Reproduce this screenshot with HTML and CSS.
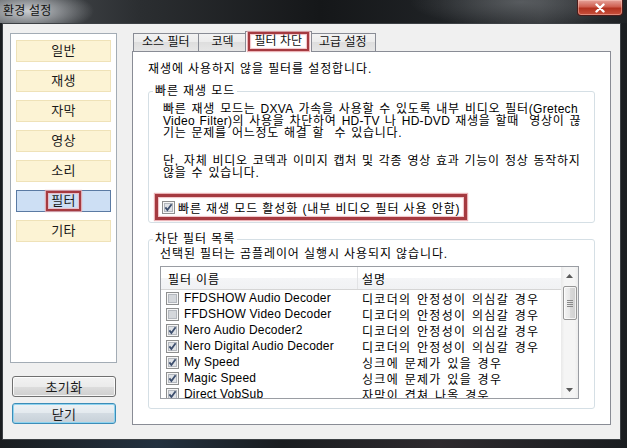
FILE: index.html
```html
<!DOCTYPE html>
<html lang="ko">
<head>
<meta charset="utf-8">
<title>환경 설정</title>
<link rel="stylesheet" href="styles.css">
</head>
<body>
<div class="window">
  <div class="titlebar">
    <div class="title">환경 설정</div>
    <div class="close">
      <svg width="14" height="10" viewBox="0 0 14 10"><path d="M3.5 1.5 L10.5 8.5 M10.5 1.5 L3.5 8.5" stroke="#ffffff" stroke-width="2.4" stroke-linecap="round"/></svg>
    </div>
  </div>
  <div class="client">
    <div class="sidebar">
      <div class="menu">
        <div class="menu-item">일반</div>
        <div class="menu-item">재생</div>
        <div class="menu-item">자막</div>
        <div class="menu-item">영상</div>
        <div class="menu-item">소리</div>
        <div class="menu-item selected"><span class="mark">필터</span></div>
        <div class="menu-item">기타</div>
      </div>
      <div class="btn reset">초기화</div>
      <div class="btn default">닫기</div>
    </div>
    <div class="tabs">
      <div class="tabstrip">
        <div class="tab">소스 필터</div>
        <div class="tab">코덱</div>
        <div class="tab active"><span class="mark">필터 차단</span></div>
        <div class="tab">고급 설정</div>
      </div>
      <div class="panel">
        <p class="intro">재생에 사용하지 않을 필터를 설정합니다.</p>
        <fieldset class="group g1">
          <legend>빠른 재생 모드</legend>
          <p class="para first">빠른 재생 모드는 <span class="lat">DXVA</span> 가속을 사용할 수 있도록 내부 비디오 필터<span class="lat">(Gretech</span><br><span class="lat">Video Filter)</span>의 사용을 차단하여 <span class="lat">HD-TV</span> 나 <span class="lat">HD-DVD</span> 재생을 할때&nbsp; 영상이 끊<br>기는 문제를 어느정도 해결 할&nbsp; 수 있습니다.</p>
          <p class="para second">단, 자체 비디오 코덱과 이미지 캡처 및 각종 영상 효과 기능이 정상 동작하지<br>않을 수 있습니다.</p>
          <div class="check-row">
            <svg class="cb" width="13" height="13" viewBox="0 0 13 13"><rect x="0.5" y="0.5" width="12" height="12" fill="#f6f6f6" stroke="#8e8f8f"/><rect x="2.5" y="2.5" width="8" height="8" fill="#dfe2e6" stroke="#b4b8be"/><path d="M3.4 6.4 L5.4 9 L9.6 3.3" fill="none" stroke="#3d4f6e" stroke-width="1.8"/></svg>
            <span>빠른 재생 모드 활성화 (내부 비디오 필터 사용 안함)</span>
          </div>
        </fieldset>
        <fieldset class="group g2">
          <legend>차단 필터 목록</legend>
          <p class="list-note">선택된 필터는 곰플레이어 실행시 사용되지 않습니다.</p>
          <div class="list">
            <div class="list-body">
              <div class="list-head">
                <div class="col1 head1">필터 이름</div>
                <div class="col2 head2">설명</div>
              </div>
              <div class="row">
                <div class="col1"><svg class="cb" width="13" height="13" viewBox="0 0 13 13"><rect x="0.5" y="0.5" width="12" height="12" fill="#f6f6f6" stroke="#8e8f8f"/><rect x="2.5" y="2.5" width="8" height="8" fill="#d4d7db" stroke="#b4b8be"/></svg>FFDSHOW Audio Decoder</div>
                <div class="col2">디코더의 안정성이 의심갈 경우</div>
              </div>
              <div class="row">
                <div class="col1"><svg class="cb" width="13" height="13" viewBox="0 0 13 13"><rect x="0.5" y="0.5" width="12" height="12" fill="#f6f6f6" stroke="#8e8f8f"/><rect x="2.5" y="2.5" width="8" height="8" fill="#d4d7db" stroke="#b4b8be"/></svg>FFDSHOW Video Decoder</div>
                <div class="col2">디코더의 안정성이 의심갈 경우</div>
              </div>
              <div class="row">
                <div class="col1"><svg class="cb" width="13" height="13" viewBox="0 0 13 13"><rect x="0.5" y="0.5" width="12" height="12" fill="#f6f6f6" stroke="#8e8f8f"/><rect x="2.5" y="2.5" width="8" height="8" fill="#dfe2e6" stroke="#b4b8be"/><path d="M3.4 6.4 L5.4 9 L9.6 3.3" fill="none" stroke="#3d4f6e" stroke-width="1.8"/></svg>Nero Audio Decoder2</div>
                <div class="col2">디코더의 안정성이 의심갈 경우</div>
              </div>
              <div class="row">
                <div class="col1"><svg class="cb" width="13" height="13" viewBox="0 0 13 13"><rect x="0.5" y="0.5" width="12" height="12" fill="#f6f6f6" stroke="#8e8f8f"/><rect x="2.5" y="2.5" width="8" height="8" fill="#dfe2e6" stroke="#b4b8be"/><path d="M3.4 6.4 L5.4 9 L9.6 3.3" fill="none" stroke="#3d4f6e" stroke-width="1.8"/></svg>Nero Digital Audio Decoder</div>
                <div class="col2">디코더의 안정성이 의심갈 경우</div>
              </div>
              <div class="row">
                <div class="col1"><svg class="cb" width="13" height="13" viewBox="0 0 13 13"><rect x="0.5" y="0.5" width="12" height="12" fill="#f6f6f6" stroke="#8e8f8f"/><rect x="2.5" y="2.5" width="8" height="8" fill="#dfe2e6" stroke="#b4b8be"/><path d="M3.4 6.4 L5.4 9 L9.6 3.3" fill="none" stroke="#3d4f6e" stroke-width="1.8"/></svg>My Speed</div>
                <div class="col2">싱크에 문제가 있을 경우</div>
              </div>
              <div class="row">
                <div class="col1"><svg class="cb" width="13" height="13" viewBox="0 0 13 13"><rect x="0.5" y="0.5" width="12" height="12" fill="#f6f6f6" stroke="#8e8f8f"/><rect x="2.5" y="2.5" width="8" height="8" fill="#dfe2e6" stroke="#b4b8be"/><path d="M3.4 6.4 L5.4 9 L9.6 3.3" fill="none" stroke="#3d4f6e" stroke-width="1.8"/></svg>Magic Speed</div>
                <div class="col2">싱크에 문제가 있을 경우</div>
              </div>
              <div class="row">
                <div class="col1"><svg class="cb" width="13" height="13" viewBox="0 0 13 13"><rect x="0.5" y="0.5" width="12" height="12" fill="#f6f6f6" stroke="#8e8f8f"/><rect x="2.5" y="2.5" width="8" height="8" fill="#dfe2e6" stroke="#b4b8be"/><path d="M3.4 6.4 L5.4 9 L9.6 3.3" fill="none" stroke="#3d4f6e" stroke-width="1.8"/></svg>Direct VobSub</div>
                <div class="col2">자막이 겹쳐 나올 경우</div>
              </div>
            </div>
            <div class="scrollbar">
              <div class="sb-btn"><svg width="7" height="4" viewBox="0 0 7 4"><path d="M0 4 L3.5 0 L7 4 Z" fill="#5a5a5a"/></svg></div>
              <div class="sb-thumb">
                <svg width="6" height="7" viewBox="0 0 6 7"><path d="M0 0.5 H6 M0 2.5 H6 M0 4.5 H6 M0 6.5 H6" stroke="#8a8a8a" stroke-width="1"/></svg>
              </div>
              <div class="sb-track"></div>
              <div class="sb-btn"><svg width="7" height="4" viewBox="0 0 7 4"><path d="M0 0 L3.5 4 L7 0 Z" fill="#5a5a5a"/></svg></div>
            </div>
          </div>
        </fieldset>
      </div>
    </div>
  </div>
</div>
</body>
</html>
```

FILE: styles.css
```css
* { box-sizing: border-box; }
html, body { margin: 0; padding: 0; }
body {
  width: 627px;
  height: 448px;
  overflow: hidden;
  background: #1d2023;
  font-family: "Liberation Sans", "Noto Sans CJK KR", sans-serif;
  font-size: 12px;
  letter-spacing: 0.9px;
  color: #000;
}
p { margin: 0; }
.lat { letter-spacing: 0.3px; }

.window {
  display: flex;
  flex-direction: column;
  height: 448px;
  background:
    linear-gradient(to right, #1a1d20 0, #23313f 25%, #1a1d20 45%, #2e2a2e 70%, #1a1d20 100%);
}

/* title bar */
.titlebar {
  height: 23px;
  display: flex;
  justify-content: space-between;
  align-items: flex-start;
  padding-right: 4px;
  background:
    radial-gradient(ellipse 66px 22px at 28px 11px, rgba(208,211,215,0.95), rgba(208,211,215,0) 100%),
    radial-gradient(ellipse 110px 26px at 520px 2px, rgba(120,124,128,0.55), rgba(120,124,128,0)),
    linear-gradient(to right, #4d5155 0, #2b2e31 140px, #151719 320px, #1f2225 440px, #34373a 540px, #1e2124 627px);
}
.title {
  padding: 4px 0 0 3px;
  font-size: 12px;
  line-height: 14px;
  color: #111;
  letter-spacing: 0.2px;
}
.close {
  width: 46px;
  height: 16px;
  display: flex;
  align-items: center;
  justify-content: center;
  border: 1px solid #4b1c1a;
  border-top: none;
  border-radius: 0 0 4px 4px;
  background: linear-gradient(to bottom, #e6a39a 0, #cf5f50 45%, #b3321f 55%, #c8513d 100%);
  box-shadow: inset 0 0 0 1px rgba(255,210,200,0.45);
}

/* client area */
.client {
  flex: 1;
  display: flex;
  margin: 0 6px 8px 2px;
  padding: 7px 9px 14px 7px;
  gap: 15px;
  background: #f0f0f0;
  border: 1px solid #3c4044;
}

.sidebar {
  width: 107px;
  display: flex;
  flex-direction: column;
  margin-top: 2px;
}
.menu {
  height: 330px;
  background: #fff;
  border: 1px solid #a3acb5;
  padding: 6px 5px;
  display: flex;
  flex-direction: column;
  gap: 8px;
}
.menu-item {
  height: 22px;
  border: 1px solid #efe2b8;
  background: #fcf3d4;
  display: flex;
  align-items: center;
  justify-content: center;
  font-size: 13px;
  line-height: 16px;
  letter-spacing: 0.3px;
  color: #1a1a1a;
}
.menu-item.selected {
  background: #cddff4;
  border-color: #5a7aa3;
}
.mark {
  border: 2px solid #a53a40;
  box-shadow: 0 0 1px 1px rgba(230,160,165,0.8), inset 0 0 1px 1px rgba(240,180,185,0.8);
}
.menu-item .mark {
  padding: 0 3px;
  line-height: 16px;
}

.btn {
  height: 21px;
  width: 104px;
  margin-left: 2px;
  border: 1px solid #707070;
  border-radius: 3px;
  background: linear-gradient(to bottom, #f2f2f2 0, #ebebeb 50%, #dddddd 50%, #cfcfcf 100%);
  box-shadow: inset 0 0 0 1px rgba(255,255,255,0.8);
  display: flex;
  align-items: center;
  justify-content: center;
  font-size: 13px;
  letter-spacing: 0.3px;
  color: #1a1a1a;
}
.btn.reset { margin-top: 13px; }
.btn.default {
  margin-top: 6px;
  border-color: #3c8db8;
  box-shadow: inset 0 0 0 1px #8fd3ef;
  background: linear-gradient(to bottom, #edf2f5 0, #e3e9ee 50%, #d3dbe2 50%, #c6d0d8 100%);
}

/* tabs */
.tabs {
  flex: 1;
  display: flex;
  flex-direction: column;
}
.tabstrip {
  display: flex;
  align-items: flex-start;
  height: 21px;
  margin-bottom: -1px;
  padding-left: 1px;
  position: relative;
  z-index: 1;
}
.tab {
  margin-top: 2px;
  height: 18px;
  min-width: 50px;
  padding: 0 8px;
  margin-right: -1px;
  border: 1px solid #898c95;
  border-bottom: none;
  background: linear-gradient(to bottom, #f3f3f3 0, #ebebeb 50%, #dedede 50%, #e6e6e6 100%);
  line-height: 16px;
  letter-spacing: 0;
  text-align: center;
  color: #111;
}
.tab.active {
  margin: 0 -2px 0 -2px;
  height: 21px;
  padding: 0 2px;
  background: #fff;
  position: relative;
  z-index: 2;
}
.tab.active .mark {
  display: block;
  height: 19px;
  padding: 0 5px;
  line-height: 15px;
}

.panel {
  flex: 1;
  background: #fff;
  border: 1px solid #898c95;
  padding: 10px 15px 0 15px;
}
.intro {
  line-height: 14px;
}

.group {
  margin: 0;
  border: 1px solid #d5dfe5;
  border-radius: 3px;
  padding: 0 4px;
  min-width: 0;
}
.group legend {
  padding: 0 2px;
  line-height: 14px;
}
.g1 { margin-top: 8px; padding-bottom: 2px; }
.g2 { margin-top: 9px; padding-bottom: 9px; }

.para {
  margin-left: 10px;
  line-height: 12px;
  letter-spacing: 0.72px;
  word-spacing: 1px;
}
.para .lat { letter-spacing: 0.3px; }
.para.first { margin-top: 5px; }
.para.second { margin-top: 16px; }

.check-row {
  margin: 15px 0 0 2px;
  height: 26px;
  display: inline-flex;
  align-items: center;
  gap: 3px;
  padding: 0 4px 0 4px;
  border: 3px solid #a53a40;
  box-shadow: 0 0 1px 1px rgba(230,160,165,0.8), inset 0 0 1px 1px rgba(240,185,190,0.9);
}
.cb { display: block; flex: none; }

.list-note {
  margin: 2px 0 0 7px;
  line-height: 12px;
}
.list {
  margin: 6px 11px 0 7px;
  height: 133px;
  border: 1px solid #9a9da3;
  display: flex;
  background: #fff;
}
.list-body {
  flex: 1;
  overflow: hidden;
}
.list-head {
  height: 23px;
  display: flex;
  border-bottom: 1px solid #d5d5d5;
  background: linear-gradient(to bottom, #ffffff 0, #ffffff 50%, #f4f5f7 50%, #f1f2f4 100%);
}
.col1 {
  width: 197px;
  flex: none;
  display: flex;
  align-items: center;
}
.col2 {
  flex: 1;
  display: flex;
  align-items: center;
  padding-left: 4px;
}
.row .col2 {
  letter-spacing: 1.3px;
  word-spacing: 1px;
}
.head1 {
  padding-left: 7px;
  border-right: 1px solid #e2e3e5;
}
.row {
  height: 16px;
  display: flex;
}
.row .col1 {
  padding-left: 5px;
  gap: 5px;
  letter-spacing: 0.2px;
}

.scrollbar {
  width: 17px;
  flex: none;
  display: flex;
  flex-direction: column;
  background: linear-gradient(to right, #e9e9e9 0, #f5f5f5 20%, #f5f5f5 80%, #ececec 100%);
}
.sb-btn {
  height: 17px;
  display: flex;
  align-items: center;
  justify-content: center;
}
.sb-thumb {
  margin: 2px 1px 0 2px;
  height: 34px;
  border: 1px solid #979797;
  border-radius: 2px;
  background: linear-gradient(to right, #f4f4f4 0, #e7e7e7 50%, #d9d9d9 51%, #d0d0d0 100%);
  box-shadow: inset 0 0 0 1px rgba(255,255,255,0.7);
  display: flex;
  align-items: center;
  justify-content: center;
}
.sb-track { flex: 1; }
```
